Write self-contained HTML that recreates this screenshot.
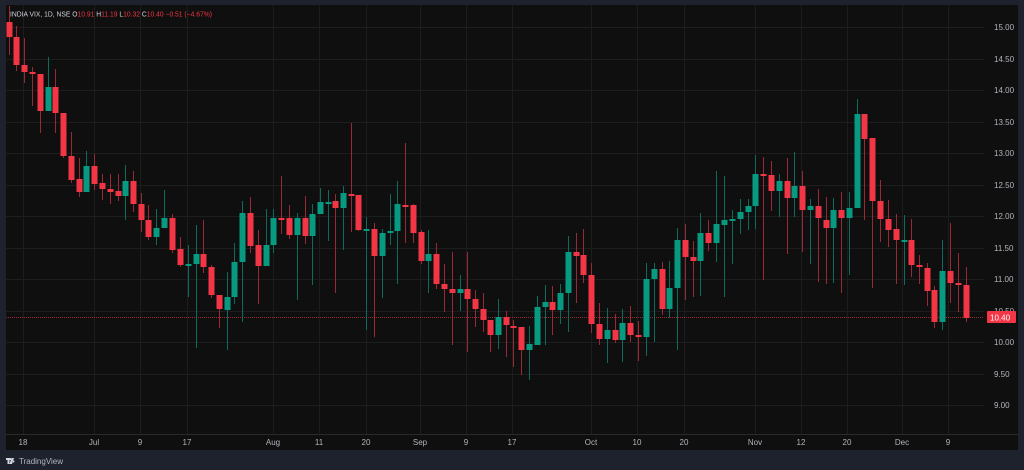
<!DOCTYPE html>
<html><head><meta charset="utf-8"><style>
html,body{margin:0;padding:0;background:#1e222d;width:1024px;height:470px;overflow:hidden}
svg{position:absolute;left:0;top:0}
text{font-family:"Liberation Sans",sans-serif}
</style></head><body>
<svg width="1024" height="470" xmlns="http://www.w3.org/2000/svg">
<rect x="6" y="5" width="1012" height="445" fill="#0f0f0f"/>
<g stroke="#1d1d1d" stroke-width="1" id="grid">
<line x1="6" x2="984" y1="27.5" y2="27.5"/><line x1="6" x2="984" y1="59.5" y2="59.5"/><line x1="6" x2="984" y1="90.5" y2="90.5"/><line x1="6" x2="984" y1="122.5" y2="122.5"/><line x1="6" x2="984" y1="153.5" y2="153.5"/><line x1="6" x2="984" y1="185.5" y2="185.5"/><line x1="6" x2="984" y1="216.5" y2="216.5"/><line x1="6" x2="984" y1="248.5" y2="248.5"/><line x1="6" x2="984" y1="279.5" y2="279.5"/><line x1="6" x2="984" y1="311.5" y2="311.5"/><line x1="6" x2="984" y1="342.5" y2="342.5"/><line x1="6" x2="984" y1="374.5" y2="374.5"/><line x1="6" x2="984" y1="405.5" y2="405.5"/>
<line y1="5" y2="434" x1="23.5" x2="23.5"/><line y1="5" y2="434" x1="94.5" x2="94.5"/><line y1="5" y2="434" x1="140.5" x2="140.5"/><line y1="5" y2="434" x1="187.5" x2="187.5"/><line y1="5" y2="434" x1="273.5" x2="273.5"/><line y1="5" y2="434" x1="319.5" x2="319.5"/><line y1="5" y2="434" x1="366.5" x2="366.5"/><line y1="5" y2="434" x1="420.5" x2="420.5"/><line y1="5" y2="434" x1="466.5" x2="466.5"/><line y1="5" y2="434" x1="512.5" x2="512.5"/><line y1="5" y2="434" x1="591.5" x2="591.5"/><line y1="5" y2="434" x1="637.5" x2="637.5"/><line y1="5" y2="434" x1="684.5" x2="684.5"/><line y1="5" y2="434" x1="755.5" x2="755.5"/><line y1="5" y2="434" x1="801.5" x2="801.5"/><line y1="5" y2="434" x1="847.5" x2="847.5"/><line y1="5" y2="434" x1="902.5" x2="902.5"/><line y1="5" y2="434" x1="948.5" x2="948.5"/>
</g>
<line x1="6" x2="1018" y1="434.5" y2="434.5" stroke="#2a2a2a"/>
<line x1="6" x2="984" y1="317.5" y2="317.5" stroke="#f23645" stroke-opacity="0.6" stroke-dasharray="1,1"/>
<g id="c"></g>
<g fill="#b2b5be" font-size="8">
<text x="994" y="30">15.00</text><text x="994" y="62">14.50</text><text x="994" y="93">14.00</text><text x="994" y="125">13.50</text><text x="994" y="156">13.00</text><text x="994" y="188">12.50</text><text x="994" y="219">12.00</text><text x="994" y="251">11.50</text><text x="994" y="282">11.00</text><text x="994" y="314">10.50</text><text x="994" y="345">10.00</text><text x="994" y="377">9.50</text><text x="994" y="408">9.00</text>
</g>
<rect x="987" y="311" width="29" height="12" rx="1" fill="#f23645"/>
<text x="990" y="320.5" font-size="8" fill="#fff">10.40</text>
<g fill="#b2b5be" font-size="8" text-anchor="middle">
<text x="23" y="445">18</text><text x="94" y="445">Jul</text><text x="140" y="445">9</text><text x="187" y="445">17</text><text x="273" y="445">Aug</text><text x="319" y="445">11</text><text x="366" y="445">20</text><text x="420" y="445">Sep</text><text x="466" y="445">9</text><text x="512" y="445">17</text><text x="591" y="445">Oct</text><text x="637" y="445">10</text><text x="684" y="445">20</text><text x="755" y="445">Nov</text><text x="801" y="445">12</text><text x="847" y="445">20</text><text x="902" y="445">Dec</text><text x="948" y="445">9</text>
</g>
<text x="10" y="16.5" font-size="7" fill="#d1d4dc" textLength="202" lengthAdjust="spacingAndGlyphs">INDIA VIX, 1D, NSE <tspan>O</tspan><tspan fill="#f23645">10.91</tspan> H<tspan fill="#f23645">11.19</tspan> L<tspan fill="#f23645">10.32</tspan> C<tspan fill="#f23645">10.40</tspan> <tspan fill="#f23645">−0.51 (−4.67%)</tspan></text>
<g fill="#d1d4dc"><path d="M6 458h5v2h-1.5v4h-2v-4H6z M11.5 458h2.5l-2 6h-2.5z M13.5 460.5a1 1 0 1 0 0.01 0z"/></g>
<text x="19" y="464" font-size="8" fill="#b2b5be">TradingView</text>
</svg>
<script>
var d=[[9,22,37,6,55,0],[16,37,65,26,71,0],[24,65,72,38,83,0],[32,72,74,67,106,0],[40,74,111,74,133,0],[48,111,87,57,111,1],[55,87,113,69,133,0],[63,113,156,113,158,0],[71,156,180,132,183,0],[79,179,192,158,197,0],[86,192,166,151,192,1],[94,166,184,154,190,0],[102,183,189,174,200,0],[110,189,192,174,204,0],[118,191,196,174,201,0],[125,196,181,165,220,1],[133,181,204,171,212,0],[141,204,220,193,232,0],[148,220,237,205,240,0],[156,237,228,209,245,1],[164,228,218,190,228,1],[172,218,250,214,253,0],[180,249,265,237,267,0],[188,264,264,245,297,1],[196,264,254,225,348,1],[203,254,267,220,273,0],[211,267,295,265,298,0],[219,295,309,295,328,0],[227,310,297,272,350,1],[234,297,262,243,304,1],[242,262,213,201,322,1],[250,213,246,197,253,0],[258,245,266,230,304,0],[266,266,245,209,266,1],[273,245,218,209,253,1],[281,218,219,176,234,0],[289,218,235,205,239,0],[297,235,218,213,300,1],[305,218,236,196,244,0],[312,236,214,204,285,1],[320,214,202,188,214,1],[328,202,202,190,241,1],[335,201,208,194,293,0],[343,208,193,186,250,1],[351,194,195,123,232,0],[358,195,230,195,231,0],[366,229,229,217,330,1],[374,229,256,223,337,0],[382,256,233,229,298,1],[390,233,231,194,245,1],[397,231,204,181,284,1],[405,205,206,143,243,0],[413,205,233,204,243,0],[421,232,261,230,264,0],[428,261,254,230,293,1],[436,254,284,243,289,0],[444,284,289,264,312,0],[452,289,293,252,345,0],[460,293,289,275,311,1],[467,289,299,252,352,0],[475,299,309,290,327,0],[483,309,320,293,332,0],[490,320,335,320,352,0],[498,335,317,299,349,1],[506,317,325,311,357,0],[513,326,327,320,367,0],[521,327,350,327,375,0],[529,350,344,326,380,1],[537,345,307,296,345,1],[545,307,302,285,345,1],[552,302,310,286,335,0],[560,310,293,284,324,1],[568,293,252,236,332,1],[576,252,256,233,303,0],[583,255,275,229,283,0],[591,275,324,263,333,0],[599,324,339,303,345,0],[607,339,330,308,363,1],[615,330,340,314,343,0],[622,340,323,309,362,1],[630,323,335,306,342,0],[638,335,336,321,361,0],[646,337,279,263,356,1],[654,279,269,263,342,1],[662,269,309,262,315,0],[669,309,288,261,318,1],[677,288,240,228,350,1],[685,240,257,224,300,0],[693,257,261,241,297,0],[700,261,233,213,296,1],[708,233,243,220,251,0],[716,243,224,171,262,1],[724,225,220,176,297,1],[732,220,219,210,264,1],[740,219,212,199,234,1],[748,212,206,199,230,1],[755,206,174,155,229,1],[763,174,176,157,280,0],[771,175,191,161,211,0],[779,191,181,174,217,1],[787,181,198,158,254,0],[794,198,186,152,217,1],[802,186,210,171,252,0],[810,210,206,199,264,1],[818,206,218,189,282,0],[826,220,228,197,284,0],[833,228,210,198,283,1],[841,210,218,192,293,0],[849,218,208,192,275,1],[857,208,114,99,208,1],[864,114,139,114,220,0],[872,138,201,138,288,0],[880,201,219,180,242,0],[888,219,230,200,247,0],[896,229,240,214,284,0],[904,240,240,215,285,1],[911,240,265,219,277,0],[919,265,267,255,284,0],[927,268,291,263,306,0],[934,290,322,286,328,0],[942,322,271,240,330,1],[950,271,283,223,303,0],[958,283,285,253,312,0],[966,285,318,267,322,0]];
var s='';d.forEach(function(c){var col=c[5]?'#089981':'#f23645',wc=c[5]?'#0b6b5c':'#992a35';var t=Math.min(c[1],c[2]),h=Math.max(2,Math.abs(c[2]-c[1]));s+='<rect x="'+c[0]+'" y="'+c[3]+'" width="1" height="'+(c[4]-c[3])+'" fill="'+wc+'"/><rect x="'+(c[0]-2.5)+'" y="'+t+'" width="6" height="'+h+'" fill="'+col+'"/>';});
document.getElementById('c').innerHTML=s;
</script>
</body></html>
